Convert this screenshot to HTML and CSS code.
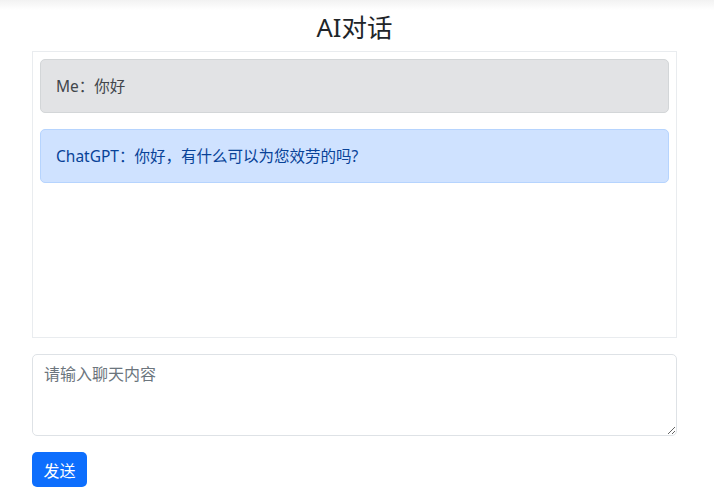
FILE: index.html
```html
<!DOCTYPE html>
<html lang="zh-CN">
<head>
    <meta charset="UTF-8">
    <title>AI对话</title>
    <meta name="viewport" content="width=device-width, initial-scale=1.0">
    <link rel="stylesheet" href="styles.css">
</head>
<body>
<div class="page">
    <h2 class="title">AI对话</h2>
    <div class="chat-box">
        <div class="msg msg-me">Me：你好</div>
        <div class="msg msg-bot">ChatGPT：你好，有什么可以为您效劳的吗?</div>
    </div>
    <textarea class="chat-input" placeholder="请输入聊天内容"></textarea>
    <button class="send-btn">发送</button>
</div>
</body>
</html>
```
FILE: styles.css
```css
html {
    background: #fff linear-gradient(#f2f2f2, #ffffff 10px) no-repeat;
    min-height: 100%;
}
body {
    margin: 0;
    font-family: "Noto Sans", "Noto Sans CJK SC", sans-serif;
    font-size: 16px;
    color: #212529;
}
.page {
    width: 645px;
    margin-left: 32px;
    padding-top: 10px;
    display: flex;
    flex-direction: column;
    align-items: flex-start;
}
.title {
    align-self: stretch;
    margin: 0 0 7px;
    text-align: center;
    font-size: 25.5px;
    font-weight: 400;
    line-height: 34px;
    color: #212529;
}
.chat-box {
    align-self: stretch;
    box-sizing: border-box;
    height: 287px;
    padding: 7px 7px;
    border: 1px solid #e9ecef;
    display: flex;
    flex-direction: column;
    gap: 16px;
}
.msg {
    padding: 14px 15px;
    border: 1px solid transparent;
    border-radius: 5px;
    line-height: 24px;
    font-size: 15.5px;
}
.msg-me {
    background-color: #e2e3e5;
    border-color: #d3d6d8;
    color: #41464b;
}
.msg-bot {
    background-color: #cfe2ff;
    border-color: #b6d4fe;
    color: #084298;
}
.chat-input {
    align-self: stretch;
    box-sizing: border-box;
    height: 82px;
    margin-top: 16px;
    padding: 7px 11px;
    border: 1px solid #dee2e6;
    border-radius: 5px;
    font-family: inherit;
    font-size: 16px;
    line-height: 24px;
    color: #212529;
}
.chat-input::placeholder {
    color: #6c757d;
}
.send-btn {
    margin-top: 16px;
    width: 55px;
    height: 35px;
    padding: 0;
    border: none;
    border-radius: 5px;
    background-color: #0d6efd;
    color: #fff;
    font-family: inherit;
    font-size: 16px;
}
```
